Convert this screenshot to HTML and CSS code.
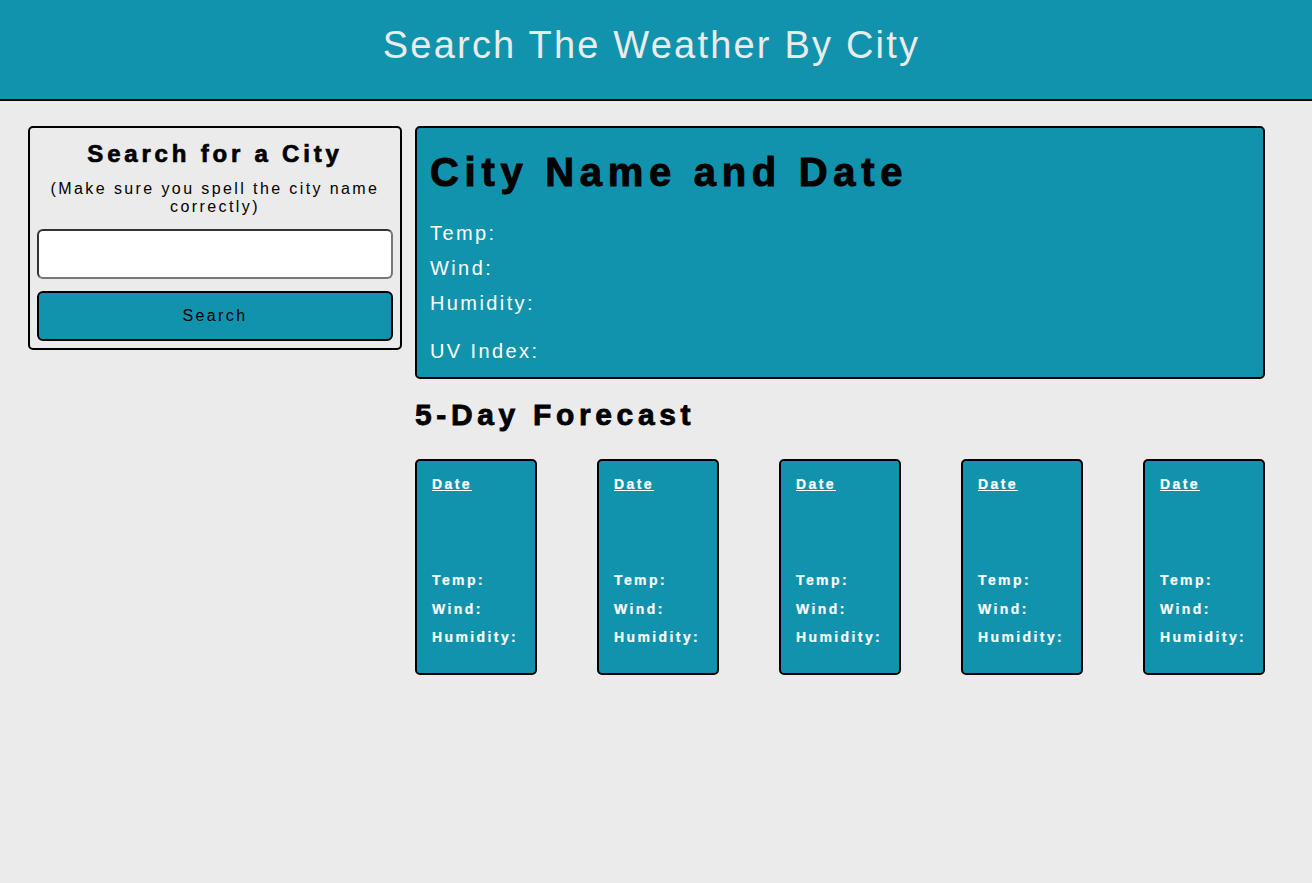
FILE: index.html
```html
<!DOCTYPE html>
<html lang="en">
<head>
<meta charset="utf-8">
<title>Weather Dashboard</title>
<link rel="stylesheet" href="styles.css">
</head>
<body>
<header class="site-header">
  <h1 class="site-title">Search The Weather By City</h1>
</header>
<main class="layout">
  <aside class="search-panel">
    <h2 class="search-title">Search for a City</h2>
    <p class="search-hint">(Make sure you spell the city name correctly)</p>
    <input class="search-input" type="text">
    <button class="search-btn" type="button">Search</button>
  </aside>
  <section class="content">
    <div class="current">
      <h2 class="current-title">City Name and Date</h2>
      <p class="stat">Temp:</p>
      <p class="stat">Wind:</p>
      <p class="stat">Humidity:</p>
      <p class="stat stat-uv">UV Index:</p>
    </div>
    <h3 class="forecast-title">5-Day Forecast</h3>
    <div class="forecast">
      <div class="day"><p class="day-date">Date </p><p class="day-stat day-temp">Temp:</p><p class="day-stat">Wind:</p><p class="day-stat">Humidity:</p></div>
      <div class="day"><p class="day-date">Date </p><p class="day-stat day-temp">Temp:</p><p class="day-stat">Wind:</p><p class="day-stat">Humidity:</p></div>
      <div class="day"><p class="day-date">Date </p><p class="day-stat day-temp">Temp:</p><p class="day-stat">Wind:</p><p class="day-stat">Humidity:</p></div>
      <div class="day"><p class="day-date">Date </p><p class="day-stat day-temp">Temp:</p><p class="day-stat">Wind:</p><p class="day-stat">Humidity:</p></div>
      <div class="day"><p class="day-date">Date </p><p class="day-stat day-temp">Temp:</p><p class="day-stat">Wind:</p><p class="day-stat">Humidity:</p></div>
    </div>
  </section>
</main>
</body>
</html>
```
FILE: styles.css
```css
* { box-sizing: border-box; }
html, body { margin: 0; padding: 0; }
body {
  background: #ebebeb;
  font-family: "Liberation Sans", Arial, sans-serif;
  min-height: 883px;
}
.site-header {
  background: #1293ad;
  height: 101px;
  border-bottom: 2px solid #000;
  display: flex;
  align-items: center;
  justify-content: center;
}
.site-title {
  margin: 0 9px 8px 0;
  color: #ebebeb;
  font-weight: normal;
  font-size: 38px;
  letter-spacing: 2.2px;
}
.layout {
  display: flex;
  align-items: flex-start;
  padding: 25px 47px 0 28px;
  gap: 13px;
}
.search-panel {
  width: 374px;
  flex: none;
  border: 2px solid #000;
  border-radius: 5px;
  padding: 12px 7px 7px;
  display: flex;
  flex-direction: column;
  text-align: center;
}
.search-title {
  margin: 0;
  font-size: 24px;
  letter-spacing: 3.8px;
  line-height: 28px;
  color: #000;
  -webkit-text-stroke: 0.7px #000;
}
.search-hint {
  margin: 12px 0 13px;
  font-size: 16px;
  line-height: 18px;
  letter-spacing: 2.4px;
  color: #000;
}
.search-input {
  height: 50px;
  border: 2px solid #777;
  border-top-color: #333;
  border-left-color: #333;
  border-radius: 6px;
  background: #fff;
  margin: 0 0 12px;
  font-size: 16px;
}
.search-btn {
  height: 50px;
  background: #1293ad;
  border: 2px solid #000;
  border-radius: 6px;
  font-family: "Liberation Sans", Arial, sans-serif;
  font-size: 16px;
  letter-spacing: 2.4px;
  color: #000;
}
.content {
  flex: 1;
  display: flex;
  flex-direction: column;
}
.current {
  background: #1293ad;
  border: 2px solid #000;
  border-radius: 5px;
  padding: 20px 13px 10px;
  height: 253px;
}
.current-title {
  margin: 0 0 20px;
  font-size: 40px;
  line-height: 48px;
  letter-spacing: 5.7px;
  color: #000;
  -webkit-text-stroke: 1px #000;
}
.stat {
  margin: 0;
  color: #fff;
  font-size: 20px;
  line-height: 35px;
  letter-spacing: 2.4px;
}
.stat-uv { margin-top: 13px; }
.forecast-title {
  margin: 18px 0 26px;
  font-size: 30px;
  line-height: 36px;
  letter-spacing: 4.65px;
  color: #000;
  -webkit-text-stroke: 0.8px #000;
}
.forecast {
  display: flex;
  justify-content: space-between;
}
.day {
  width: 122px;
  height: 216px;
  background: #1293ad;
  border: 2px solid #000;
  border-radius: 5px;
  padding: 13px 15px;
  color: #fff;
}
.day-date {
  margin: 0;
  font-size: 14px;
  font-weight: bold;
  letter-spacing: 2.4px;
  text-decoration: underline;
  line-height: 20px;
  -webkit-text-stroke: 0.2px #fff;
}
.day-stat {
  margin: 0;
  font-size: 14px;
  font-weight: bold;
  letter-spacing: 2.4px;
  line-height: 28.5px;
  -webkit-text-stroke: 0.2px #fff;
}
.day-temp { margin-top: 72px; }
```
